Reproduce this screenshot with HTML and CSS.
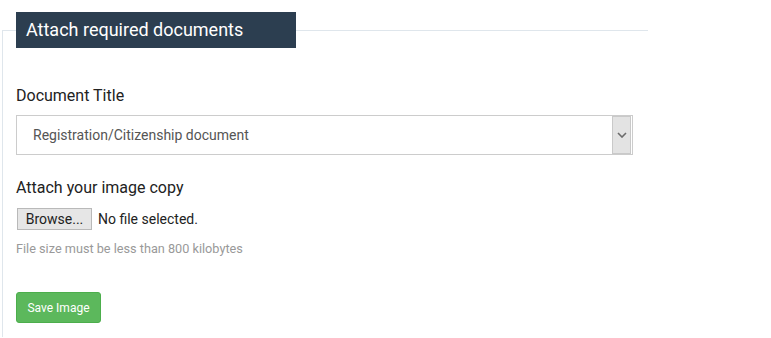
FILE: index.html
```html
<!DOCTYPE html>
<html>
<head>
<meta charset="utf-8">
<link rel="stylesheet" href="styles.css">
</head>
<body>
<fieldset class="panel">
  <legend class="panel-title">Attach required documents</legend>
  <div class="field">
    <label class="field-label">Document Title</label>
    <div class="select">
      <span class="select-value">Registration/Citizenship document</span>
      <span class="select-arrow">
        <svg width="10" height="6" viewBox="0 0 10 6"><path d="M1 1 L5 5 L9 1" fill="none" stroke="#6b6b6b" stroke-width="1.6"/></svg>
      </span>
    </div>
  </div>
  <div class="field field-file">
    <label class="field-label">Attach your image copy</label>
    <div class="file-row">
      <span class="browse">Browse...</span>
      <span class="file-name">No file selected.</span>
    </div>
    <p class="hint">File size must be less than 800 kilobytes</p>
  </div>
  <button class="btn-save">Save Image</button>
</fieldset>
</body>
</html>
```
FILE: styles.css
```css
html, body {
  margin: 0;
  padding: 0;
  background: #fff;
  font-family: Roboto, "Liberation Sans", sans-serif;
}
.panel {
  margin: 12px 0 0 2px;
  width: 646px;
  box-sizing: border-box;
  border: none;
  border-top: 1px solid #dfe6ec;
  border-left: 1px solid #dfe6ec;
  padding: 0 0 14px 13px;
}
.panel-title {
  background: #2c3e50;
  color: #fff;
  font-size: 18px;
  width: 280px;
  height: 36px;
  box-sizing: border-box;
  padding: 0 10px;
  line-height: 36px;
  margin: 0;
}
.field {
  margin-top: 38px;
}
.field-label {
  display: block;
  font-size: 16px;
  color: #222;
  line-height: 20px;
  margin-bottom: 9px;
}
.select {
  width: 617px;
  height: 40px;
  box-sizing: border-box;
  border: 1px solid #cccccc;
  display: flex;
  align-items: center;
  justify-content: space-between;
  padding: 0 0 0 16px;
}
.select-value {
  font-size: 14px;
  color: #555;
}
.select-arrow {
  width: 17px;
  height: 36px;
  margin-right: 1px;
  background: #e3e3e3;
  border: 1px solid #c9c9c9;
  display: flex;
  align-items: center;
  justify-content: center;
}
.field-file {
  margin-top: 23px;
}
.field-file .field-label {
  margin-bottom: 10px;
}
.file-row {
  display: flex;
  align-items: center;
  gap: 6px;
}
.browse {
  display: inline-block;
  width: 75px;
  height: 22px;
  box-sizing: border-box;
  margin-left: 1px;
  background: #e6e6e6;
  border: 1px solid #b9b9b9;
  font-size: 14px;
  color: #222;
  text-align: center;
  line-height: 20px;
}
.file-name {
  font-size: 14px;
  color: #222;
}
.hint {
  margin: 11px 0 0;
  font-size: 12.7px;
  line-height: 16px;
  color: #999;
}
.btn-save {
  margin-top: 35px;
  width: 85px;
  height: 31px;
  background: #5cb85c;
  border: 1px solid #4cae4c;
  border-radius: 3px;
  color: #fff;
  font-family: Roboto, "Liberation Sans", sans-serif;
  font-size: 12px;
  padding: 0;
}
```
